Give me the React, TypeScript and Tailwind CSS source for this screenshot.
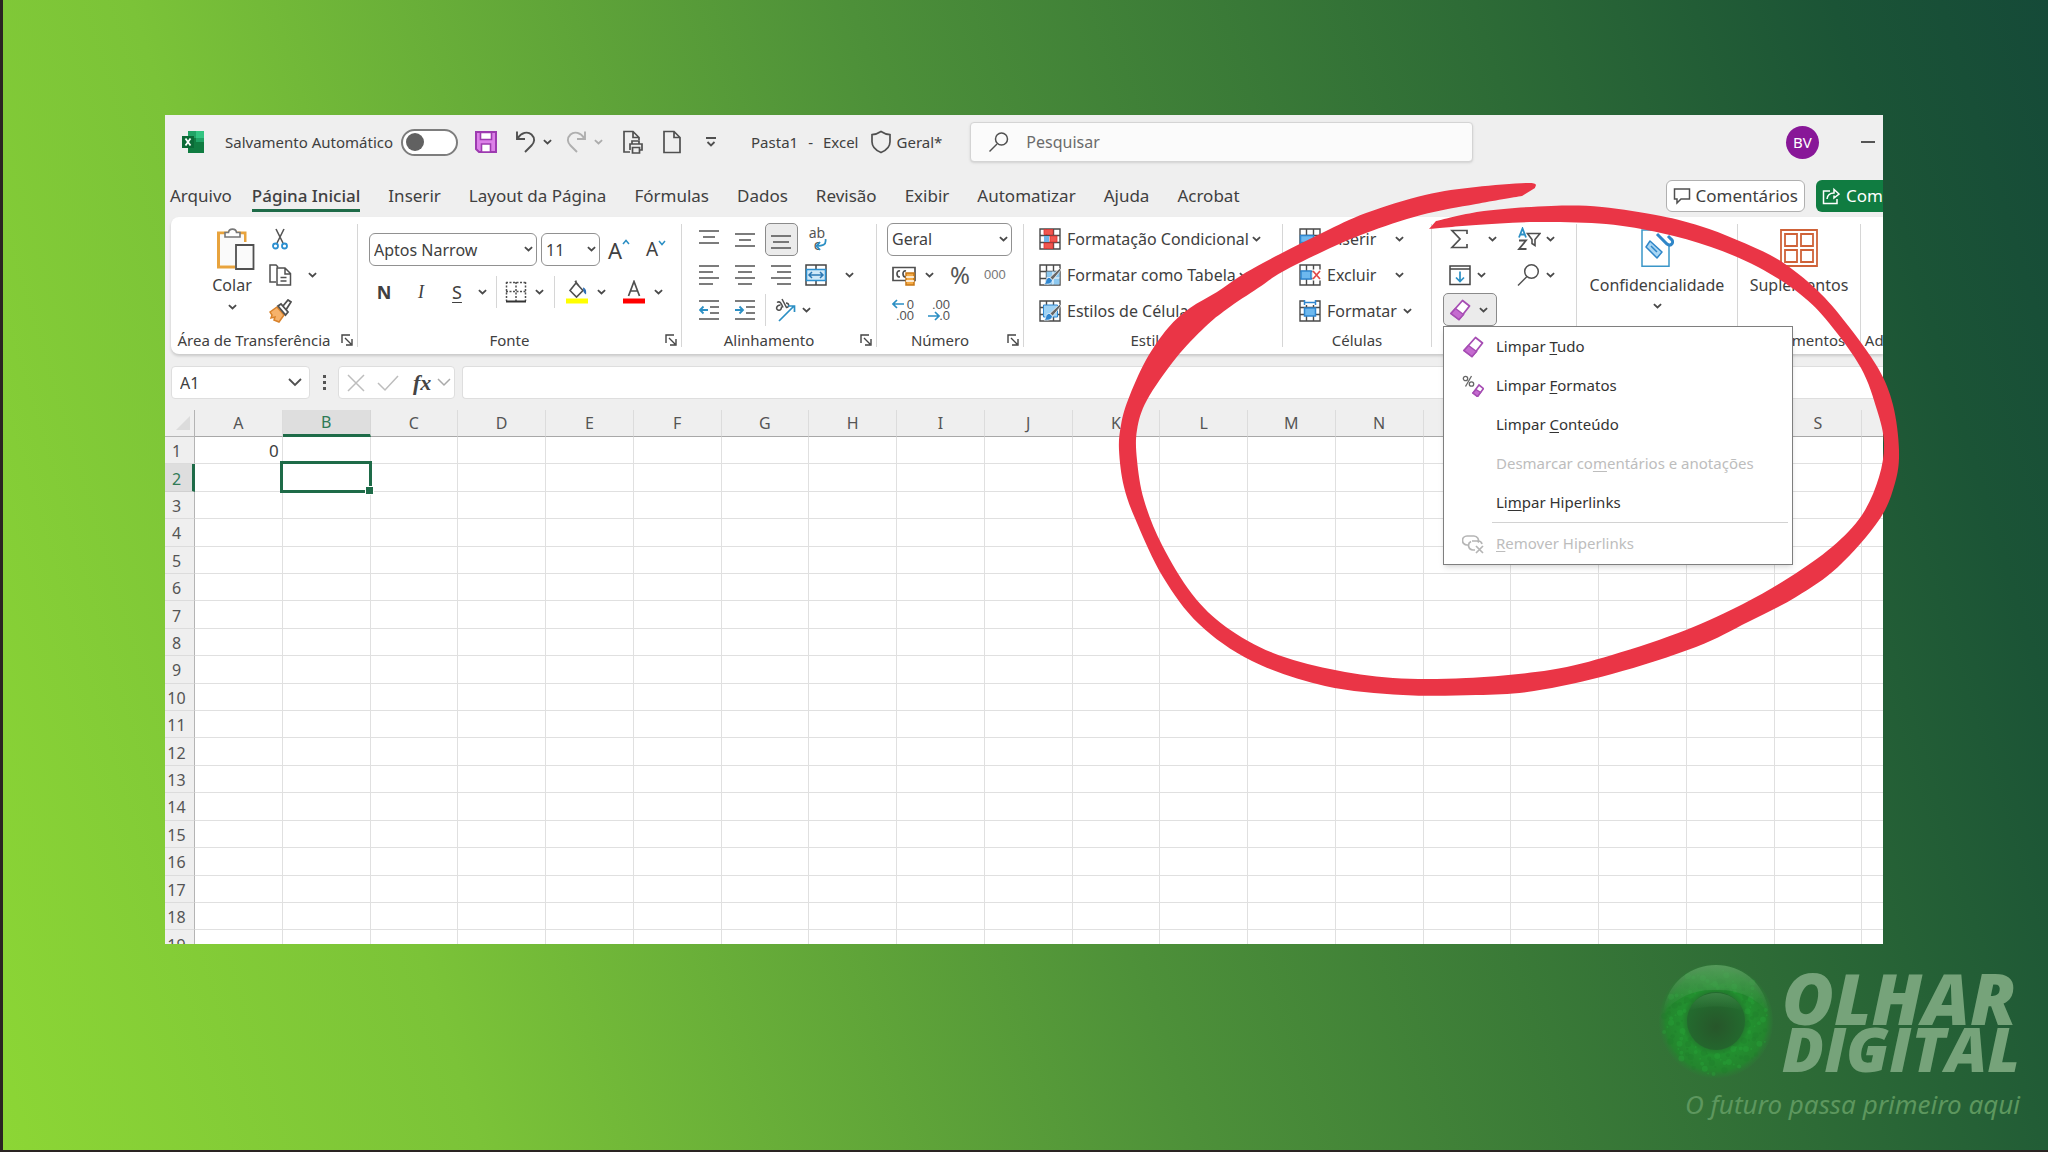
import React from "react";

type Pt = [number, number];

/* ---------- helpers ---------- */

function smooth(points: Pt[], start: boolean): string {
  let d = start ? `M${points[0][0]} ${points[0][1]}` : `L${points[0][0]} ${points[0][1]}`;
  for (let i = 0; i < points.length - 1; i++) {
    const p0 = points[Math.max(0, i - 1)];
    const p1 = points[i];
    const p2 = points[i + 1];
    const p3 = points[Math.min(points.length - 1, i + 2)];
    const c1 = [p1[0] + (p2[0] - p0[0]) / 6, p1[1] + (p2[1] - p0[1]) / 6];
    const c2 = [p2[0] - (p3[0] - p1[0]) / 6, p2[1] - (p3[1] - p1[1]) / 6];
    d += `C${c1[0]} ${c1[1]} ${c2[0]} ${c2[1]} ${p2[0]} ${p2[1]}`;
  }
  return d;
}

const OUTER: Pt[] = [
  [1535, 188], [1530, 183], [1476, 187], [1425, 195], [1366, 213], [1324, 232], [1282, 253], [1245, 273],
  [1217, 292], [1190, 308], [1168, 328], [1146, 360], [1128, 400], [1121, 425], [1119, 450], [1124, 487],
  [1137, 523], [1163, 577], [1199, 624], [1252, 661], [1325, 686], [1403, 695], [1476, 695], [1534, 691],
  [1612, 674], [1696, 647], [1748, 622], [1796, 597], [1838, 567], [1879, 520], [1895, 483], [1899, 450],
  [1893, 405], [1878, 368], [1846, 323], [1817, 290], [1779, 260], [1737, 240], [1700, 226], [1661, 216],
  [1602, 207], [1551, 206], [1484, 211], [1436, 221],
];
const INNER: Pt[] = [
  [1429, 229], [1476, 225], [1535, 222], [1606, 224], [1661, 233], [1711, 247], [1758, 267], [1800, 294],
  [1829, 323], [1861, 368], [1877, 410], [1884, 443], [1879, 477], [1862, 515], [1832, 547], [1790, 577],
  [1743, 604], [1686, 630], [1612, 655], [1550, 670], [1466, 678], [1393, 678], [1330, 669], [1273, 653],
  [1226, 627], [1192, 594], [1162, 545], [1144, 500], [1137, 460], [1137, 430], [1147, 400], [1176, 358],
  [1205, 327], [1227, 309], [1258, 288], [1282, 272], [1324, 251], [1366, 233], [1421, 215], [1476, 204],
  [1522, 196],
];

function Marker() {
  return (
    <svg
      viewBox="1100 170 820 540"
      className="pointer-events-none absolute -right-[37px] top-[55px] h-[540px] w-[820px]"
      aria-hidden="true"
    >
      <path d={smooth(OUTER, true) + smooth(INNER, false) + "Z"} fill="#ea3546" />
    </svg>
  );
}

function Chev({ className = "" }: { className?: string }) {
  return (
    <svg viewBox="0 0 10 6" className={"h-[6px] w-[9px] shrink-0 " + className} fill="none" stroke="#4a4a4a" strokeWidth="2">
      <path d="M1 1l4 3.6L9 1" />
    </svg>
  );
}

function Ic({ children, className = "size-6", vb = "0 0 24 24" }: { children: React.ReactNode; className?: string; vb?: string }) {
  return (
    <svg viewBox={vb} className={"shrink-0 " + className} fill="none" stroke="#505050" strokeWidth="1.5" aria-hidden="true">
      {children}
    </svg>
  );
}

function Btn({ label, className = "", children }: { label: string; className?: string; children: React.ReactNode }) {
  return (
    <button type="button" aria-label={label} className={"flex items-center justify-center " + className}>
      {children}
    </button>
  );
}

function Launcher({ label }: { label: string }) {
  return (
    <Btn label={label} className="absolute right-1 top-[5px] size-3">
      <Ic className="size-3" vb="0 0 12 12">
        <path d="M1 9V1h8M4 4l6 6M11 5v6H5" stroke="#444" strokeWidth="1.4" />
      </Ic>
    </Btn>
  );
}

function Group({ label, launcher, className, children }: { label: string; launcher?: boolean; className: string; children: React.ReactNode }) {
  return (
    <>
      <section aria-label={label} className={"flex h-full shrink-0 flex-col pt-1 " + className}>
        <div className="h-[108px]">{children}</div>
        <div className="relative flex h-[22px] items-center justify-center text-[15px]">
          <span className={launcher ? "pr-5" : ""}>{label}</span>
          {launcher && <Launcher label={"Configurações de " + label} />}
        </div>
      </section>
      <div className="my-[7px] w-px shrink-0 bg-[#d6d6d6]" />
    </>
  );
}

/* ---------- icons ---------- */

const Lines = ({ rows, arrow }: { rows: [number, number, number][]; arrow?: string }) => (
  <Ic className="h-[22px] w-5" vb="0 0 20 22">
    {rows.map(([y, a, b], i) => (
      <path key={i} d={`M${a} ${y}H${b}`} />
    ))}
    {arrow && <path d={arrow} stroke="#2b8fc4" strokeWidth="1.8" />}
  </Ic>
);

const Eraser = ({ className = "size-[22px]" }: { className?: string }) => (
  <Ic className={className} vb="0 0 22 22">
    <path d="M13.5 1.5l7 5.5L10 20.500l-8-6z" fill="#fff" stroke="#a64db3" strokeWidth="1.8" strokeLinejoin="round" />
    <path d="M6.500 9.500l8 6L10 20.500l-8-6z" fill="#c56bd0" stroke="#a64db3" strokeWidth="1.500" />
  </Ic>
);

const SheetGrid = ({ children }: { children?: React.ReactNode }) => (
  <Ic className="size-[22px]" vb="0 0 22 22">
    <path d="M1 1h20v20H1zM1 7.500h20M1 14.500h20M7.500 1v20M14.500 1v20" stroke="#4a4a4a" strokeWidth="1.400" />
    {children}
  </Ic>
);

const Brush = () => (
  <>
    <path d="M11 13.500c-2.500-.5-4 1.500-4.300 3.700-.2 1.500-.8 2.300-1.700 2.800 4 .7 8-.2 8.500-4z" fill="#2f86d0" stroke="#fff" strokeWidth=".7" />
    <path d="M20.500 4.500l1.500 1.500-8.300 10-2.700-2.500z" fill="#666" stroke="#fff" strokeWidth=".7" />
  </>
);

/* ---------- title bar ---------- */

function TitleBar() {
  return (
    <header className="flex h-[54px] items-center pl-4 pr-[7px] text-[15px]">
      <Ic className="size-6" vb="0 0 24 24">
        <path d="M7 1h16v22H7z" fill="#21a366" stroke="none" />
        <path d="M15 1h8v7h-8z" fill="#33c481" stroke="none" />
        <path d="M7 12h16v11H7z" fill="#107c41" stroke="none" />
        <path d="M7 8h8v8H7z" fill="#107c41" stroke="none" />
        <path d="M1 6h12v12H1z" fill="#0b6a37" stroke="none" />
        <path d="M4.500 8.500l5 7M9.500 8.500l-5 7" stroke="#fff" strokeWidth="1.800" />
      </Ic>
      <label className="ml-5 flex shrink-0 items-center gap-2">
        Salvamento Automático
        <input type="checkbox" className="peer sr-only" />
        <span className="flex h-[27px] w-[57px] items-center rounded-full border-2 border-[#7d7d7d] bg-white pl-[3px]">
          <span className="size-[18px] rounded-full bg-[#616161]" />
        </span>
      </label>
      <Btn label="Salvar" className="ml-4">
        <Ic className="size-6">
          <path d="M2 2h20v20H5l-3-3z" fill="#dc80e8" stroke="#9d3bb0" strokeWidth="2" />
          <path d="M6.500 2.500h11v7h-11zM7.500 14h9v8h-9z" fill="#fff" stroke="#9d3bb0" strokeWidth="1.600" />
        </Ic>
      </Btn>
      <Btn label="Desfazer" className="ml-4 gap-[5px]">
        <Ic className="size-6">
          <path d="M3 1.500V9h8M3.500 8.500c4-6 10-7.500 14-4 4 3.800 3 8 0 11L11 22" strokeWidth="1.900" />
        </Ic>
        <Chev />
      </Btn>
      <Btn label="Refazer" className="ml-3 gap-[6px] opacity-40">
        <Ic className="size-6">
          <path d="M21 1.500V9h-8M20.500 8.500c-4-6-10-7.500-14-4-4 3.800-3 8 0 11L13 22" strokeWidth="1.900" />
        </Ic>
        <Chev />
      </Btn>
      <Btn label="Visualizar impressão" className="ml-[18px]">
        <Ic className="size-6">
          <path d="M9 22H3V1.500h9l6 6V10M12 1.500v6h6" strokeWidth="1.700" />
          <path d="M11 14v-3h7v3M9 20v-6h12v6h-2M11.500 17.500h7V23h-7z" strokeWidth="1.700" />
        </Ic>
      </Btn>
      <Btn label="Novo" className="ml-[15px]">
        <Ic className="size-6">
          <path d="M4 1.500h10l6 6V22.500H4zM14 1.500v6h6" strokeWidth="1.700" />
        </Ic>
      </Btn>
      <Btn label="Personalizar barra" className="ml-[15px] w-6">
        <Ic className="size-3" vb="0 0 12 12">
          <path d="M1 2h10M2.500 6L6 9.500 9.500 6" strokeWidth="1.800" />
        </Ic>
      </Btn>
      <h1 className="ml-7 flex shrink-0 gap-[10px]">
        <span>Pasta1</span>
        <span>-</span>
        <span>Excel</span>
      </h1>
      <Btn label="Confidencialidade: Geral" className="ml-[10px] shrink-0 gap-1">
        <Ic className="size-6">
          <path d="M12 1.500c3 2 5.500 3 9 3.200v7c0 5-3.500 8.500-9 10.800-5.500-2.300-9-5.800-9-10.800v-7c3.500-.2 6-1.200 9-3.200z" strokeWidth="1.700" />
        </Ic>
        <span>Geral*</span>
      </Btn>
      <label className="ml-7 flex h-10 w-[503px] items-center gap-4 rounded-sm border border-[#d4d4d4] bg-[#fbfbfb] px-[17px] shadow-sm">
        <Ic className="size-[22px]" vb="0 0 22 22">
          <circle cx="13.500" cy="8" r="6" />
          <path d="M9 13l-7.500 7.500" />
        </Ic>
        <input type="search" aria-label="Pesquisar" placeholder="Pesquisar" className="w-full bg-transparent text-base outline-none placeholder:text-[#6b6b6b]" />
      </label>
      <Btn label="Conta" className="ml-auto size-[33px] rounded-full bg-[#881798] text-[15px] text-white">
        BV
      </Btn>
      <Btn label="Minimizar" className="ml-[41px] h-6 w-4">
        <span className="h-[2px] w-[14px] bg-[#555]" />
      </Btn>
    </header>
  );
}

/* ---------- tabs ---------- */

const TABS = ["Inserir", "Layout da Página", "Fórmulas", "Dados", "Revisão", "Exibir", "Automatizar", "Ajuda", "Acrobat"];

function Tabs() {
  return (
    <nav className="mt-[11px] flex h-[37px] items-start pl-[5px] text-[17px]">
      <div className="flex gap-7">
        <div className="flex gap-5">
          <button type="button" className="h-8">Arquivo</button>
          <button type="button" className="h-8 border-b-[3px] border-[#1e6b48] pt-[2px] font-medium">Página Inicial</button>
        </div>
        {TABS.map((t) => (
          <button key={t} type="button" className="h-8">
            {t}
          </button>
        ))}
      </div>
      <div className="ml-auto -mr-[61px] flex shrink-0 gap-[11px]">
        <button type="button" className="flex h-8 items-center gap-1 rounded-md border border-[#b0b0b0] bg-white px-[6px]">
          <Ic className="size-[18px]" vb="0 0 18 18">
            <path d="M1.500 2h15v10H8l-4 4v-4H1.500z" />
          </Ic>
          Comentários
        </button>
        <button type="button" className="flex h-8 w-[128px] items-center gap-[6px] overflow-hidden rounded-md bg-[#107c41] px-[6px] text-white">
          <Ic className="size-[18px]" vb="0 0 18 18">
            <path d="M8 4H1.500v12.500H15V12M5 12c.5-4 3-6 7-6V2.500L17 7l-5 4V8.500" stroke="#fff" />
          </Ic>
          Compartilhar
        </button>
      </div>
    </nav>
  );
}

/* ---------- ribbon ---------- */

function Combo({ label, value, className }: { label: string; value: string; className: string }) {
  return (
    <div className={"relative " + className}>
      <select aria-label={label} className="size-full appearance-none rounded-md border border-[#919191] bg-white px-1 text-base">
        <option>{value}</option>
      </select>
      <Chev className="pointer-events-none absolute right-1 top-[13px]" />
    </div>
  );
}

const MENU: { pre: string; key: string; post: string; icon?: string; off?: boolean }[] = [
  { pre: "Limpar ", key: "T", post: "udo", icon: "all" },
  { pre: "Limpar ", key: "F", post: "ormatos", icon: "format" },
  { pre: "Limpar ", key: "C", post: "onteúdo" },
  { pre: "Desmarcar co", key: "m", post: "entários e anotações", off: true },
  { pre: "Li", key: "m", post: "par Hiperlinks" },
];

function ClearMenu() {
  return (
    <ul role="menu" className="absolute left-0 top-full z-10 w-[350px] border border-[#7f7f7f] bg-white text-[15px] shadow-md">
      {MENU.map((m) => (
        <li key={m.pre + m.post} role="none">
          <button
            type="button"
            role="menuitem"
            disabled={m.off}
            className="flex h-[39px] w-full items-center gap-3 pl-[18px] text-[#333] disabled:text-[#bdbdbd]"
          >
            <span className="flex w-[22px]">
              {m.icon === "all" && <Eraser />}
              {m.icon === "format" && (
                <Ic className="size-[22px]" vb="0 0 22 22">
                  <g stroke="#666" strokeWidth="1.300">
                    <circle cx="3.500" cy="3.500" r="2.200" />
                    <circle cx="9.500" cy="9" r="2.200" />
                    <path d="M9.500 1L3.500 11.500" />
                  </g>
                  <path d="M17 10l4.500 3.500-6 8-4.500-3.500z" fill="#fff" stroke="#a64db3" strokeWidth="1.600" />
                  <path d="M14 14.500l4.500 3-3 4-4.500-3.500z" fill="#c56bd0" stroke="#a64db3" />
                </Ic>
              )}
            </span>
            <span className="whitespace-pre">
              {m.pre}
              <u className="underline-offset-2">{m.key}</u>
              {m.post}
            </span>
          </button>
        </li>
      ))}
      <li role="separator" className="ml-12 mr-1 h-px bg-[#d2d2d2]" />
      <li role="none">
        <button type="button" role="menuitem" disabled className="flex h-[41px] w-full items-center gap-3 pl-[18px] disabled:text-[#bdbdbd]">
          <Ic className="size-[22px]" vb="0 0 22 22">
            <path
              d="M7 12H5a4.500 4.500 0 010-9h7a4.500 4.500 0 014 6.500M10 8h6a4 4 0 014 3M13 17h-2a4.500 4.500 0 01-2-8.500M14 13l7 7M21 13l-7 7"
              stroke="#b5b5b5"
              strokeWidth="1.700"
            />
          </Ic>
          <span>
            <u className="underline-offset-2">R</u>emover Hiperlinks
          </span>
        </button>
      </li>
    </ul>
  );
}

function Ribbon() {
  return (
    <div className="ml-[6px] flex h-[137px] rounded-l-lg bg-white text-base shadow-[0_2px_3px_rgba(0,0,0,0.16)]">
      <Group label="Área de Transferência" launcher className="w-[186px] whitespace-nowrap">
        <div className="flex pl-[30px]">
          <button type="button" className="flex w-[62px] flex-col items-center pt-[7px]">
            <Ic className="ml-2 h-[42px] w-[38px]" vb="0 0 38 42">
              <path d="M28 14V5H1.500v34H18" stroke="#e8a33d" strokeWidth="3" fill="none" />
              <path d="M3 6.500h24V37H3z" fill="#fafafa" stroke="none" />
              <path d="M8 9V4.500h3.500c.5-4.500 7.500-4.500 8 0H23V9z" fill="#fff" stroke="#777" strokeWidth="1.600" />
              <path d="M19 17h17.500v24H19z" fill="#fafafa" stroke="#505050" strokeWidth="1.800" />
            </Ic>
            <span className="mt-[3px]">Colar</span>
            <Chev className="mt-[7px]" />
          </button>
          <div className="grid grid-rows-3 pl-[5px]">
            <Btn label="Recortar" className="h-9 w-6">
              <Ic className="h-[22px] w-4" vb="0 0 16 22">
                <path d="M4 1l7 14M12 1L5 15" stroke="#555" strokeWidth="1.600" />
                <circle cx="3.500" cy="18" r="2.500" stroke="#2b8fd0" strokeWidth="1.800" />
                <circle cx="12.500" cy="18" r="2.500" stroke="#2b8fd0" strokeWidth="1.800" />
              </Ic>
            </Btn>
            <Btn label="Copiar" className="h-9 gap-4">
              <Ic>
                <path d="M8 19H2V2h6l2 2M9 5h8l5.500 5.500V22H9zM17 5v6h5.500M12.500 14.500h6M12.500 18h6" />
              </Ic>
              <Chev />
            </Btn>
            <Btn label="Pincel de formatação" className="h-9 w-6">
              <Ic>
                <path d="M2 13l7-5 7 8-5 7-5-2 1-3-4 1 1-3z" fill="#f6b26b" stroke="#d9822b" />
                <path d="M10 7l3-2 7 8-2.500 3zM15 7l5-6 3 2-4.500 7" fill="#fff" strokeWidth="1.800" />
              </Ic>
            </Btn>
          </div>
        </div>
      </Group>

      <Group label="Fonte" launcher className="w-[323px]">
        <div className="flex flex-col gap-[11px] pl-[11px] pt-3">
          <div className="flex items-center">
            <Combo label="Fonte" value="Aptos Narrow" className="h-[33px] w-[168px]" />
            <Combo label="Tamanho da fonte" value="11" className="ml-1 h-[33px] w-[59px]" />
            <Btn label="Aumentar fonte" className="ml-2 items-start">
              <span className="text-[22px] leading-none">A</span>
              <Ic className="h-[6px] w-2" vb="0 0 8 6"><path d="M1 5l3-3.500L7 5" stroke="#2b8fc4" /></Ic>
            </Btn>
            <Btn label="Diminuir fonte" className="ml-4 items-start">
              <span className="text-[19px] leading-none">A</span>
              <Ic className="h-[6px] w-2" vb="0 0 8 6"><path d="M1 1l3 3.500L7 1" stroke="#2b8fc4" /></Ic>
            </Btn>
          </div>
          <div className="flex h-[30px] items-center">
            <Btn label="Negrito" className="w-[30px] text-lg font-bold">N</Btn>
            <Btn label="Itálico" className="ml-[7px] w-[30px] font-[Liberation_Serif] text-lg italic">I</Btn>
            <Btn label="Sublinhado" className="ml-[6px] w-[30px] text-lg underline underline-offset-[3px]">S</Btn>
            <Chev className="ml-[6px]" />
            <div className="ml-[9px] h-8 w-px bg-[#d6d6d6]" />
            <Btn label="Bordas" className="ml-[8px] gap-[8px]">
              <Ic className="size-[22px]" vb="0 0 22 22">
                <path d="M1.500 1v19M20.500 1v19M1 1.500h20M1 10.500h20M11 1v19" strokeDasharray="2 1.500" />
                <path d="M1 20.500h20" strokeWidth="2" stroke="#333" />
              </Ic>
              <Chev />
            </Btn>
            <div className="ml-[10px] h-8 w-px bg-[#d6d6d6]" />
            <Btn label="Cor de preenchimento" className="ml-[10px] gap-2">
              <Ic>
                <path d="M11 3l7 7.500-6.500 6.500L5 10.500zM11 3V.5M14 6l-4-5" strokeWidth="1.600" />
                <path d="M18 7.500c3 .5 3.500 4 3 7-2-1-3-3-3-7z" fill="#2f6fb5" stroke="none" />
                <path d="M1 18.500h22v5H1z" fill="#ff0" stroke="none" />
              </Ic>
              <Chev />
            </Btn>
            <Btn label="Cor da fonte" className="ml-4 gap-2">
              <Ic>
                <path d="M6.500 16L12 1.500 17.500 16M8.500 11h7" strokeWidth="1.700" />
                <path d="M1 18.500h22v5H1z" fill="#f00" stroke="none" />
              </Ic>
              <Chev />
            </Btn>
          </div>
        </div>
      </Group>

      <Group label="Alinhamento" launcher className="w-[194px]">
        <div className="flex flex-col pl-[9px]">
          <div className="flex h-9">
            <Btn label="Alinhar em cima" className="w-9"><Lines rows={[[3, 0, 20], [9, 4, 16], [15, 0, 20]]} /></Btn>
            <Btn label="Alinhar no meio" className="w-9"><Lines rows={[[6, 0, 20], [12, 4, 16], [18, 0, 20]]} /></Btn>
            <Btn label="Alinhar embaixo" className="w-9">
              <span className="flex size-[33px] items-center justify-center rounded-[5px] border border-[#8a8a8a] bg-[#ebebeb]">
                <Lines rows={[[8, 0, 20], [14, 2, 18], [20, 0, 20]]} />
              </span>
            </Btn>
            <Btn label="Quebrar texto" className="w-9">
              <span className="relative flex h-6 w-5 flex-col text-[14px] leading-3 text-[#555]">
                <span>ab</span>
                <span>c</span>
                <Ic className="absolute bottom-0 right-0 h-3 w-3" vb="0 0 12 12"><path d="M10.500 0c1 6-3 7-9 7M5 3L1.500 7 5 11" stroke="#2b8fc4" strokeWidth="1.800" /></Ic>
              </span>
            </Btn>
          </div>
          <div className="flex h-9 items-center">
            <Btn label="Alinhar à esquerda" className="w-9"><Lines rows={[[2, 0, 20], [8, 0, 14], [14, 0, 20], [20, 0, 14]]} /></Btn>
            <Btn label="Centralizar" className="w-9"><Lines rows={[[2, 0, 20], [8, 3, 17], [14, 0, 20], [20, 3, 17]]} /></Btn>
            <Btn label="Alinhar à direita" className="w-9"><Lines rows={[[2, 0, 20], [8, 6, 20], [14, 0, 20], [20, 6, 20]]} /></Btn>
            <Btn label="Mesclar e centralizar" className="ml-[6px] gap-[18px]">
              <Ic className="size-[22px]" vb="0 0 22 22">
                <path d="M1 1h20v20H1zM11 1v20" stroke="#444" />
                <path d="M1.500 5.500h19v11h-19z" fill="#cfe8f8" stroke="#2b8fd0" />
                <path d="M4 11h14M7 8l-3 3 3 3M15 8l3 3-3 3" stroke="#2b78b4" />
              </Ic>
              <Chev />
            </Btn>
          </div>
          <div className="flex h-[34px] items-center">
            <Btn label="Diminuir recuo" className="w-9"><Lines rows={[[2, 0, 20], [8, 11, 20], [14, 11, 20], [20, 0, 20]]} arrow="M9 11H1M4.500 7.500L1 11l3.500 3.500" /></Btn>
            <Btn label="Aumentar recuo" className="w-9"><Lines rows={[[2, 0, 20], [8, 11, 20], [14, 11, 20], [20, 0, 20]]} arrow="M0 11h8M4.500 7.500L8 11l-3.500 3.500" /></Btn>
            <div className="ml-[2px] h-8 w-px bg-[#d6d6d6]" />
            <Btn label="Orientação" className="ml-[6px] gap-[6px]">
              <Ic>
                <path d="M5 4.500c3-2 4.500 1 6 5M8.500 7c-4 0-5 4-2.500 5s3.500-1 3.500-3.500M10 1l4.500 8.500c3 0 3-4.500-.5-4.500" strokeWidth="1.500" />
                <path d="M7 23L22 8M16 8h6.500v6" stroke="#2b8fc4" strokeWidth="1.700" />
              </Ic>
              <Chev />
            </Btn>
          </div>
        </div>
      </Group>

      <Group label="Número" launcher className="w-[146px]">
        <div className="flex flex-col pl-[10px]">
          <div className="flex h-9 items-center">
            <Combo label="Formato de número" value="Geral" className="h-[33px] w-[125px]" />
          </div>
          <div className="flex h-9 items-center pl-[5px]">
            <Btn label="Formato de contabilização" className="gap-[9px]">
              <Ic>
                <path d="M1 4.500h22v13H1zM8 8c-4-1-4 6 0 6M14 8c-4-1-4 6 0 6" strokeWidth="1.700" />
                <path d="M14 10h8v12h-8z" fill="#f3a944" stroke="#c77716" />
                <path d="M14 14h8M14 18h8" stroke="#fff" />
              </Ic>
              <Chev />
            </Btn>
            <Btn label="Porcentagem" className="ml-4 text-2xl leading-none text-[#555]">%</Btn>
            <Btn label="Separador de milhares" className="ml-[14px] font-[Liberation_Sans] text-[13px] text-[#777]">000</Btn>
          </div>
          <div className="flex h-[34px] items-center gap-[14px] pl-[5px]">
            <Btn label="Aumentar casas decimais">
              <span className="relative flex w-[22px] flex-col items-end font-[Liberation_Sans] text-[13px] leading-[11px] text-[#555]">
                <span>0</span><span>.00</span>
                <Ic className="absolute left-0 top-0 h-[10px] w-3" vb="0 0 12 10"><path d="M12 5H1M5 1L1 5l4 4" stroke="#2b8fc4" strokeWidth="1.700" /></Ic>
              </span>
            </Btn>
            <Btn label="Diminuir casas decimais">
              <span className="relative flex w-[22px] flex-col items-end font-[Liberation_Sans] text-[13px] leading-[11px] text-[#555]">
                <span>.00</span><span>.0</span>
                <Ic className="absolute bottom-0 left-0 h-[10px] w-3" vb="0 0 12 10"><path d="M0 5h11M7 1l4 4-4 4" stroke="#2b8fc4" strokeWidth="1.700" /></Ic>
              </span>
            </Btn>
          </div>
        </div>
      </Group>

      <Group label="Estilos" className="w-[258px]">
        <div className="flex flex-col items-start whitespace-nowrap pl-[15px]">
          <button type="button" className="flex h-9 items-center gap-[6px]">
            <SheetGrid>
              <path d="M5 1.500h9v5H5zM11 8h7v6h-7zM5 15h9v5.500H5z" fill="#f0574f" stroke="#d33" strokeWidth=".8" />
              <path d="M5 8h5v6H5z" fill="#6fb4e8" stroke="none" />
            </SheetGrid>
            Formatação Condicional
            <Chev className="-ml-[3px]" />
          </button>
          <button type="button" className="flex h-9 items-center gap-[6px]">
            <SheetGrid>
              <path d="M7.500 7.500h13v13h-13z" fill="#8cc8f0" stroke="none" />
              <path d="M7.500 14h13M14 7.500v13" stroke="#fff" strokeWidth="1" />
              <Brush />
            </SheetGrid>
            Formatar como Tabela
            <Chev className="-ml-[3px]" />
          </button>
          <button type="button" className="flex h-9 items-center gap-[6px]">
            <SheetGrid>
              <path d="M4.500 5h14v12h-14z" fill="#9ed2f5" stroke="#2f86d0" strokeWidth="1" />
              <Brush />
            </SheetGrid>
            Estilos de Célula
            <Chev className="-ml-[3px]" />
          </button>
        </div>
      </Group>

      <Group label="Células" className="w-[148px]">
        <div className="flex flex-col pl-4 pr-[27px]">
          <button type="button" className="flex h-9 items-center gap-[6px]">
            <SheetGrid><path d="M1.500 7.500h13v7h-13z" fill="#6db8ee" stroke="#2f86d0" /></SheetGrid>
            Inserir
            <Chev className="ml-auto" />
          </button>
          <button type="button" className="flex h-9 items-center gap-[6px]">
            <SheetGrid>
              <path d="M2 7h10v8H2z" fill="#6db8ee" stroke="#2f86d0" />
              <path d="M13.500 5.500h9v11h-9z" fill="#fff" stroke="none" />
              <path d="M14 7l7 8M21 7l-7 8" stroke="#e04848" strokeWidth="1.700" />
            </SheetGrid>
            Excluir
            <Chev className="ml-auto" />
          </button>
          <button type="button" className="flex h-9 items-center gap-[6px]">
            <SheetGrid>
              <path d="M5.500 0h11v5h-11z" fill="#fff" stroke="none" />
              <path d="M5.500 2.500h11M5.500 0v5M16.500 0v5" stroke="#2f86d0" />
              <path d="M5.500 8h11v8h-11z" fill="#6db8ee" stroke="#2f86d0" />
            </SheetGrid>
            Formatar
            <Chev className="ml-auto" />
          </button>
        </div>
      </Group>

      <Group label="Edição" className="w-[144px]">
        <div className="flex flex-col">
          <div className="flex h-9 items-center pl-[18px]">
            <Btn label="Soma" className="gap-[18px]">
              <Ic className="size-5" vb="0 0 20 20"><path d="M17 5V1.500H2L10 10l-8 8.500h15V15" strokeWidth="1.700" /></Ic>
              <Chev />
            </Btn>
            <Btn label="Classificar e filtrar" className="ml-5 gap-[5px]">
              <Ic>
                <path d="M2 10.500L5.500 1.500 9 10.500M3 7.500h5" stroke="#2b8fc4" strokeWidth="1.800" />
                <path d="M2 13.500h7L2 22h7.500" strokeWidth="1.800" />
                <path d="M10.500 6.500H23l-5 6v6l-3-2v-4z" strokeWidth="1.600" />
              </Ic>
              <Chev />
            </Btn>
          </div>
          <div className="flex h-9 items-center pl-[17px]">
            <Btn label="Preencher" className="gap-[6px]">
              <Ic className="size-[22px]" vb="0 0 22 22">
                <path d="M1 2h20v18.500H1zM1 5h20" stroke="#444" />
                <path d="M11 7.500v10M7 13.500l4 4 4-4" stroke="#2b8fc4" strokeWidth="1.700" />
              </Ic>
              <Chev />
            </Btn>
            <Btn label="Localizar e selecionar" className="ml-[31px] gap-[5px]">
              <Ic>
                <circle cx="14.500" cy="8.500" r="6.800" />
                <path d="M10 13.500L1 22.500" />
              </Ic>
              <Chev />
            </Btn>
          </div>
          <div className="relative ml-[11px] w-[54px]">
            <Btn label="Limpar" className="h-[33px] w-[54px] gap-2 rounded-[5px] border border-[#8a8a8a] bg-[#ebebeb] pr-1">
              <Eraser className="size-[22px]" />
              <Chev />
            </Btn>
            <ClearMenu />
          </div>
        </div>
      </Group>

      <Group label="Confidencialidade" className="w-[160px]">
        <button type="button" className="flex w-full flex-col items-center pt-2">
          <Ic className="h-[38px] w-[34px]" vb="0 0 34 38">
            <path d="M29 16v21.200H2V1h18" stroke="#3a96c8" strokeWidth="1.500" />
            <path d="M10 12l12 11-5 6L6 18z" fill="#a9d6f4" stroke="#2f86c8" strokeWidth="1.500" strokeLinejoin="round" />
            <path d="M11 17l6 6" stroke="#2f86c8" />
            <path d="M17 5l10 10c4 3 8-2 4-5l-3-3" stroke="#2f86c8" strokeWidth="3" />
          </Ic>
          <span className="mt-[6px] leading-6">Confidencialidade</span>
          <Chev className="mt-[6px]" />
        </button>
      </Group>

      <Group label="Suplementos" className="w-[122px]">
        <button type="button" className="flex w-full flex-col items-center pt-2">
          <Ic className="size-[38px]" vb="0 0 38 38">
            <path d="M1 1h36v36H1zM5 5h12v12H5zM21 5h12v12H21zM5 21h12v12H5zM21 21h12v12H21z" stroke="#cf6238" strokeWidth="1.800" />
          </Ic>
          <span className="mt-[6px] leading-6">Suplementos</span>
        </button>
      </Group>

      <Group label="Adobe Acrobat" className="w-28 whitespace-nowrap">
        <span />
      </Group>
    </div>
  );
}

/* ---------- formula bar ---------- */

function FormulaBar() {
  return (
    <div className="mt-3 flex h-[33px] shrink-0 pl-[6px]">
      <div className="relative w-[139px]">
        <select aria-label="Caixa de nome" className="size-full appearance-none rounded-sm border border-[#dedede] bg-white px-2 text-base">
          <option>A1</option>
        </select>
        <Ic className="pointer-events-none absolute right-2 top-3 h-[9px] w-[14px]" vb="0 0 14 9">
          <path d="M1 1l6 6 6-6" strokeWidth="1.800" />
        </Ic>
      </div>
      <div className="flex w-7 flex-col items-center justify-center gap-[3px]">
        <span className="size-[3px] bg-[#555]" />
        <span className="size-[3px] bg-[#555]" />
        <span className="size-[3px] bg-[#555]" />
      </div>
      <div className="flex w-[117px] items-center rounded-sm border border-[#dedede] bg-white pl-2">
        <Btn label="Cancelar">
          <Ic className="size-[18px]" vb="0 0 18 18"><path d="M1 1l16 16M17 1L1 17" stroke="#bdbdbd" /></Ic>
        </Btn>
        <Btn label="Inserir" className="ml-3">
          <Ic className="h-[18px] w-[22px]" vb="0 0 22 18"><path d="M1 9l7 7L21 2" stroke="#bdbdbd" /></Ic>
        </Btn>
        <Btn label="Inserir função" className="ml-[14px] font-[Liberation_Serif] text-[22px] font-bold italic leading-none text-[#444]">fx</Btn>
        <Ic className="ml-[6px] h-[9px] w-[14px]" vb="0 0 14 9"><path d="M1 1l6 6 6-6" stroke="#aaa" /></Ic>
      </div>
      <input aria-label="Barra de fórmulas" className="ml-[7px] min-w-0 flex-1 rounded-l-sm border border-r-0 border-[#dedede] bg-white px-2 outline-none" />
    </div>
  );
}

/* ---------- sheet ---------- */

const COLS = "ABCDEFGHIJKLMNOPQRST".split("");
const ROWS = Array.from({ length: 19 }, (_, i) => i + 1);

function Sheet() {
  return (
    <div className="mt-[11px] min-h-0 flex-1 overflow-hidden">
      <table className="h-[548px] w-[1785px] table-fixed border-separate border-spacing-0 bg-white">
        <thead>
          <tr className="h-[27px] text-base text-[#555]">
            <th className="w-[30px] border-b border-r border-[#b4b4b4] bg-[#efefef] p-0">
              <span className="ml-auto mr-1 block size-0 border-b-[14px] border-l-[14px] border-b-[#dcdcdc] border-l-transparent" />
            </th>
            {COLS.map((c) => (
              <th
                key={c}
                scope="col"
                className={
                  c === "B"
                    ? "border-b-[3px] border-r border-b-[#1e6b48] border-r-[#d6d6d6] bg-[#dedede] p-0 font-normal leading-6 text-[#2f7a55]"
                    : "border-b border-r border-b-[#a8a8a8] border-r-[#dcdcdc] bg-[#efefef] p-0 font-normal leading-6"
                }
              >
                {c}
              </th>
            ))}
          </tr>
        </thead>
        <tbody>
          {ROWS.map((r) => (
            <tr key={r}>
              <th
                scope="row"
                className={
                  r === 2
                    ? "border-b border-r-[3px] border-b-[#d0d0d0] border-r-[#1e6b48] bg-[#dedede] pb-0 pl-0 pr-1 pt-[2px] text-base font-normal leading-6 text-[#2f7a55]"
                    : "border-b border-r border-b-[#dcdcdc] border-r-[#b4b4b4] bg-[#efefef] pb-0 pl-0 pr-[6px] pt-[2px] text-base font-normal leading-6 text-[#555]"
                }
              >
                {r}
              </th>
              {COLS.map((c) => {
                const active = c === "B" && r === 2;
                return (
                  <td
                    key={c}
                    className={
                      (active ? "relative z-10 " : "") +
                      "border-b border-r border-[#e0e0e0] pb-0 pl-0 pr-[3px] pt-[2px] text-right text-[17px] leading-6"
                    }
                  >
                    {c === "A" && r === 1 ? "0" : null}
                    {active ? (
                      <span className="absolute -bottom-[2px] -left-[3px] -right-[2px] -top-[3px] border-[3px] border-[#1e6b48]">
                        <span className="absolute -bottom-[5px] -right-[5px] size-[9px] border border-white bg-[#1e6b48]" />
                      </span>
                    ) : null}
                  </td>
                );
              })}
            </tr>
          ))}
        </tbody>
      </table>
    </div>
  );
}

/* ---------- brand ---------- */

function Brand() {
  const specks = Array.from({ length: 130 }, (_, i) => {
    const a = i * 2.39996;
    const r = 32 + ((i * 37) % 22);
    return [58 + r * Math.cos(a), 58 + r * Math.sin(a), 1 + (i % 3)];
  });
  return (
    <footer className="flex h-[206px] shrink-0 flex-col items-end pr-7 pt-[19px]">
      <div className="flex items-center gap-2">
        <svg viewBox="0 0 116 116" className="size-[116px]" aria-hidden="true">
          <defs>
            <radialGradient id="iris">
              <stop offset="0.45" stopColor="#23702c" />
              <stop offset="0.6" stopColor="#22902f" />
              <stop offset="0.88" stopColor="#24852e" />
              <stop offset="1" stopColor="#2b7d34" stopOpacity="0.2" />
            </radialGradient>
            <radialGradient id="pupil" cx="0.5" cy="0.6">
              <stop offset="0" stopColor="#27562a" />
              <stop offset="1" stopColor="#236a2e" />
            </radialGradient>
            <linearGradient id="shine" x1="0" y1="0" x2="0" y2="1">
              <stop offset="0" stopColor="#5fa364" stopOpacity="0.8" />
              <stop offset="1" stopColor="#4b9a54" stopOpacity="0" />
            </linearGradient>
          </defs>
          <circle cx="58" cy="58" r="57" fill="url(#iris)" />
          {specks.map(([x, y, s], i) => (
            <circle key={i} cx={x} cy={y} r={s} fill={i % 2 ? "#29a838" : "#1f7a2b"} opacity="0.35" />
          ))}
          <circle cx="58" cy="58" r="29" fill="url(#pupil)" />
          <path d="M5 50C14-14 102-14 111 50 96 32 76 26 58 27 40 26 20 32 5 50z" fill="url(#shine)" />
          <path d="M31 48c8-24 46-24 54 0-14-6-40-6-54 0z" fill="url(#shine)" opacity="0.5" />
        </svg>
        <div className="flex flex-col pt-1 font-[Open_Sans] font-extrabold italic text-[#76a37a]">
          <span className="text-[71px] leading-[51px]">OLHAR</span>
          <span className="text-[62px] leading-[51px]">DIGITAL</span>
        </div>
      </div>
      <p className="mt-[5px] text-[26px] italic leading-10 text-[#5d975e]">O futuro passa primeiro aqui</p>
    </footer>
  );
}

export default function App() {
  return (
    <div className="flex h-screen min-h-[700px] flex-col overflow-hidden border-b-2 border-l-[3px] border-[#2a2422] bg-[linear-gradient(73deg,#8cd635_0%,#7bc338_20%,#4d9039_50%,#2d6b36_76%,#1b5436_91%,#154a38_100%)] pt-[115px] font-['Noto_Sans',sans-serif] text-[#404040]">
      <div className="relative ml-[162px] mr-[165px] flex min-h-0 flex-1 flex-col">
        <main className="flex min-h-0 flex-1 flex-col overflow-hidden bg-[#efefef]">
          <TitleBar />
          <Tabs />
          <Ribbon />
          <FormulaBar />
          <Sheet />
        </main>
        <Marker />
      </div>
      <Brand />
    </div>
  );
}
